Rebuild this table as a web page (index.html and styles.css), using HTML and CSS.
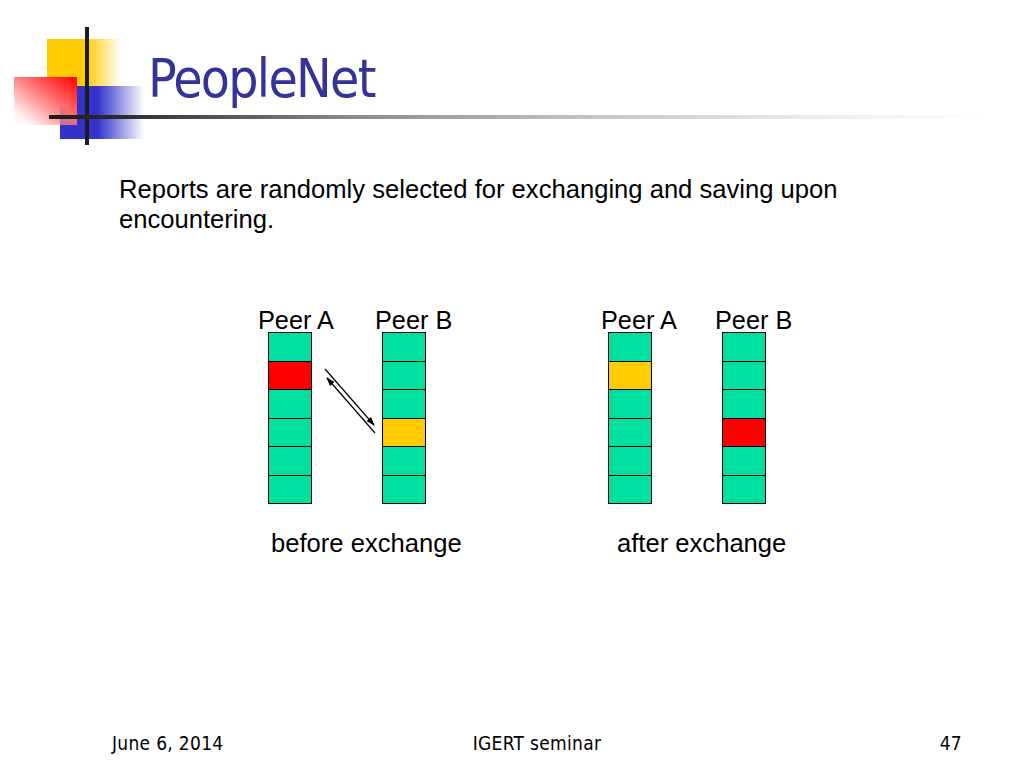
FILE: index.html
```html
<!DOCTYPE html>
<html>
<head>
<meta charset="utf-8">
<link rel="stylesheet" href="styles.css">
</head>
<body>
<div class="slide">
  <header class="head">
    <div class="logo" aria-hidden="true">
      <span class="sq yellow"></span>
      <span class="sq blue"></span>
      <span class="sq red"></span>
      <span class="vline"></span>
    </div>
    <h1 class="title">PeopleNet</h1>
    <div class="rule"></div>
  </header>

  <p class="lead">Reports are randomly selected for exchanging and saving upon encountering.</p>

  <div class="diagrams">
    <div class="group group-before">
      <div class="peers">
        <div class="peer">
          <div class="peer-label label-a1">Peer A</div>
          <div class="stack">
            <div class="cell"></div><div class="cell red"></div><div class="cell"></div>
            <div class="cell"></div><div class="cell"></div><div class="cell"></div>
          </div>
        </div>
        <svg class="swap" width="70" height="200" viewBox="312 304 70 200">
          <defs>
            <marker id="ah" markerWidth="9" markerHeight="8" refX="8" refY="4" orient="auto" markerUnits="userSpaceOnUse">
              <path d="M0,1 L9,4 L0,7 Z" fill="#000"/>
            </marker>
          </defs>
          <line x1="325" y1="369" x2="374" y2="425" stroke="#000" stroke-width="1.2" marker-end="url(#ah)"/>
          <line x1="375" y1="433" x2="327" y2="378" stroke="#000" stroke-width="1.2" marker-end="url(#ah)"/>
        </svg>
        <div class="peer">
          <div class="peer-label label-b">Peer B</div>
          <div class="stack">
            <div class="cell"></div><div class="cell"></div><div class="cell"></div>
            <div class="cell yellow"></div><div class="cell"></div><div class="cell"></div>
          </div>
        </div>
      </div>
      <div class="caption cap-before">before exchange</div>
    </div>

    <div class="group group-after">
      <div class="peers">
        <div class="peer">
          <div class="peer-label label-a2">Peer A</div>
          <div class="stack">
            <div class="cell"></div><div class="cell yellow"></div><div class="cell"></div>
            <div class="cell"></div><div class="cell"></div><div class="cell"></div>
          </div>
        </div>
        <div class="spacer"></div>
        <div class="peer">
          <div class="peer-label label-b">Peer B</div>
          <div class="stack">
            <div class="cell"></div><div class="cell"></div><div class="cell"></div>
            <div class="cell red"></div><div class="cell"></div><div class="cell"></div>
          </div>
        </div>
      </div>
      <div class="caption cap-after">after exchange</div>
    </div>
  </div>

  <footer class="foot">
    <span class="foot-left">June 6, 2014</span>
    <span class="foot-center">IGERT seminar</span>
    <span class="foot-right">47</span>
  </footer>
</div>
</body>
</html>
```

FILE: styles.css
```css
html, body {
  margin: 0;
  padding: 0;
  background: #fff;
}

.slide {
  width: 1024px;
  height: 768px;
  display: flex;
  flex-direction: column;
  font-family: "Liberation Sans", Arial, sans-serif;
  color: #000;
  overflow: hidden;
}

/* ---------- header ---------- */
.head {
  position: relative;
  padding-top: 52px;
}

.logo {
  position: absolute;
  left: 0;
  top: 0;
  width: 150px;
  height: 150px;
}

.sq {
  position: absolute;
  display: block;
}

.sq.yellow {
  left: 47px;
  top: 39px;
  width: 74px;
  height: 48px;
  background: linear-gradient(to right, #ffcc00 0, #ffcc00 52%, rgba(255, 204, 0, 0) 100%);
}

.sq.blue {
  left: 60px;
  top: 86px;
  width: 84px;
  height: 53px;
  background: linear-gradient(to right, #3333cc 0, #3333cc 45%, rgba(51, 51, 204, 0) 100%);
}

.sq.red {
  left: 14px;
  top: 77px;
  width: 63px;
  height: 48px;
  background: linear-gradient(to bottom left, #ff0000 0%, #ff6a6a 40%, rgba(255, 220, 220, 0.4) 85%, rgba(255, 255, 255, 0) 100%);
}

.vline {
  position: absolute;
  left: 85px;
  top: 27px;
  width: 4px;
  height: 118px;
  background: #1c1c1c;
}

.title {
  margin: 0;
  padding-left: 148px;
  font-family: "DejaVu Sans Condensed", "DejaVu Sans", sans-serif;
  font-stretch: condensed;
  font-weight: normal;
  font-size: 53px;
  line-height: 53px;
  letter-spacing: -1.7px;
  color: #333399;
  position: relative;
}

.rule {
  position: relative;
  margin-top: 10px;
  margin-left: 49px;
  width: 940px;
  height: 4px;
  background: linear-gradient(to right, #1c1c1c 0, #2a2a2a 70px, #8a8a8a 300px, #c8c8c8 560px, #eeeeee 780px, #ffffff 940px);
}

/* ---------- body text ---------- */
.lead {
  margin: 55px 0 0 0;
  padding: 0 140px 0 119px;
  font-size: 25.6px;
  line-height: 30px;
}

/* ---------- diagrams ---------- */
.diagrams {
  display: flex;
  margin-top: 70px;
  padding-left: 268px;
  gap: 182px;
}

.group {
  display: flex;
  flex-direction: column;
  width: 158px;
}

.peers {
  display: flex;
}

.peer {
  width: 44px;
  height: 200px;
  display: flex;
  flex-direction: column;
}

.peer-label {
  font-size: 25.3px;
  line-height: 28px;
  padding-top: 2px;
  margin-bottom: -2px;
  white-space: nowrap;
}

.label-a1 { margin-left: -10px; }
.label-a2 { margin-left: -7px; }
.label-b  { margin-left: -7px; }

.swap {
  display: block;
  flex: none;
  width: 70px;
  height: 200px;
}

.spacer {
  width: 70px;
  flex: none;
}

.stack {
  display: grid;
  grid-template-rows: repeat(6, 27.5px);
  gap: 1px;
  padding: 1px;
  background: #000;
  width: 42px;
}

.cell {
  background: #00e0a0;
}

.cell.red { background: #ff0000; }
.cell.yellow { background: #ffcc00; }

.caption {
  margin-top: 24px;
  font-size: 25.6px;
  line-height: 30px;
  white-space: nowrap;
}

.cap-before { margin-left: 3px; }
.cap-after { margin-left: 9px; }

/* ---------- footer ---------- */
.foot {
  margin-top: auto;
  margin-bottom: 13px;
  display: grid;
  grid-template-columns: 1fr auto 1fr;
  padding: 0 62px 0 112px;
  font-family: "DejaVu Sans Condensed", "DejaVu Sans", sans-serif;
  font-stretch: condensed;
  font-size: 19px;
  line-height: 24px;
  letter-spacing: 0.3px;
}

.foot-center { text-align: center; }
.foot-right { text-align: right; }
```
